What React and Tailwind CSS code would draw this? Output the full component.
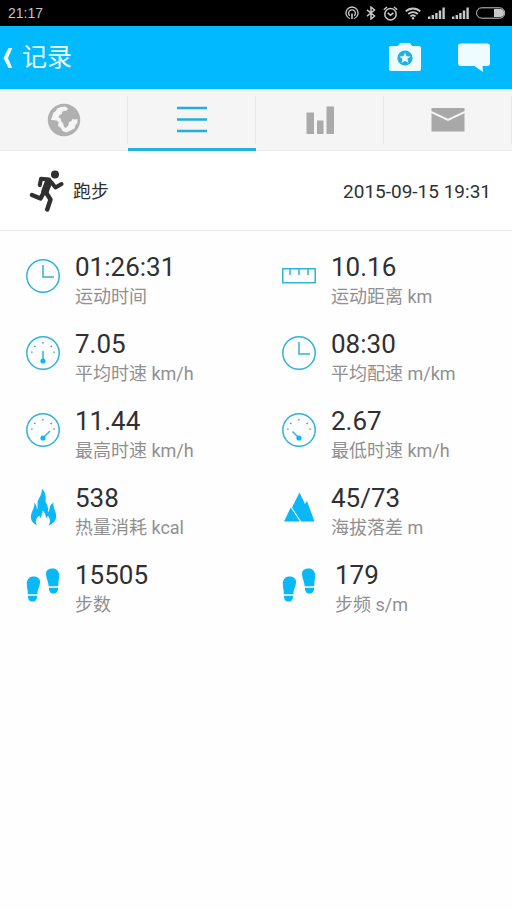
import React from 'react';

function StatusIcons() {
  return (
    <div className="flex items-center gap-[7px] text-[#c8c8c8]">
      <svg className="h-[14px] w-[14px]" viewBox="0 0 14 14" fill="none" stroke="currentColor" strokeWidth="1.3">
        <path d="M4.8 12.6A6 6 0 1 1 9.2 12.6" />
        <path d="M4.8 9.8A3.4 3.4 0 1 1 9.2 9.8" />
        <path d="M7 7.500V13" strokeWidth="1.6" />
      </svg>
      <svg className="h-[14px] w-[10px]" viewBox="0 0 10 14" fill="none" stroke="currentColor" strokeWidth="1.5">
        <path d="M1 3.8 8.500 10 5 13V1L8.500 4 1 10.2" />
      </svg>
      <svg className="h-[15px] w-[15px]" viewBox="0 0 15 15" fill="none" stroke="currentColor" strokeWidth="1.5">
        <circle cx="7.5" cy="8.2" r="5.7" />
        <path d="M0.8 3.8 4 1M14.2 3.8 11 1M4.6 6.8 7.500 9.2l2.900-2.4" />
      </svg>
      <svg className="h-[13px] w-[16px]" viewBox="0 0 16 13" fill="none" stroke="currentColor" strokeWidth="1.8">
        <path d="M0.8 4.4a10.4 10.4 0 0 1 14.4 0M3.2 7a7 7 0 0 1 9.6 0M5.4 9.4a3.8 3.8 0 0 1 5.2 0" />
        <circle cx="8" cy="11.3" r="1.2" fill="currentColor" stroke="none" />
      </svg>
      <Signal />
      <Signal />
      <svg className="h-3 w-[30px]" viewBox="0 0 30 12" fill="none" stroke="currentColor">
        <rect x="0.6" y="0.8" width="28" height="10.4" rx="5" />
        <path d="M18 2h6a4 4 0 0 1 0 8h-6z" fill="currentColor" stroke="none" />
      </svg>
    </div>
  );
}

function Signal() {
  return (
    <svg className="h-3 w-[17px]" viewBox="0 0 17 12" fill="currentColor">
      <path d="M0 9.5h2.400V12H0zM3.600 8H6v4H3.600zM7.200 6h2.400v6H7.200zM10.800 3.5h2.400V12h-2.400zM14.400 0.5h2.400V12h-2.400z" />
    </svg>
  );
}

const dial = (
  <>
    <circle cx="17" cy="17" r="16.2" />
    <path d="M5.2 16l1.4.4M8.2 9.8l1.200 1M16.9 6v1.600M25.8 9.8l-1.200 1M28.8 16l-1.4.4" stroke="#4d9fb5" />
  </>
);

const icons = {
  clock: (
    <>
      <circle cx="17" cy="17" r="16.2" />
      <path d="M17 6v12h11" />
    </>
  ),
  ruler: <path d="M.8 9.8h32.4v14H.8zM8 10v6M17 10v6M26 10v6" />,
  average: (
    <>
      {dial}
      <path d="M17 15v9" />
      <circle cx="17" cy="25" r="2.6" fill="currentColor" stroke="none" />
    </>
  ),
  fastest: (
    <>
      {dial}
      <path d="M24 18l-7 7" />
      <circle cx="17" cy="25" r="2.6" fill="currentColor" stroke="none" />
    </>
  ),
  slowest: (
    <>
      {dial}
      <path d="M10.5 18.5 17 25" />
      <circle cx="17" cy="25" r="2.6" fill="currentColor" stroke="none" />
    </>
  ),
  flame: (
    <path
      fill="currentColor"
      stroke="none"
      d="M11 35.500C6.500 33.500 4.300 30 5 25.500 5.500 21 9 18 8.300 12.500c1.900 2 2.700 4.500 2.500 7.500 1.200-2 .7-4 .7-6.500C11.800 7.500 16.500 5.500 15.800-1.500c4 4 4.200 8 3.700 11.500-.3 3 2.300 4.500 2.500 8.500.1 1.500 0 2.500-.1 3.500 1.400-1 1.700-2.500 1.700-4 .1-2.500 1.900-4 3.900-5.500-.7 5.500 2.500 8.500 2.700 13.500.1 4.500-2.400 7.500-7.700 9.500 2.500-4 1.500-7.500-.7-9.800-.4 1.200-1 2-1.800 2.300-.2-3.500-1.500-5.500-3.300-7.500-.2 2.800-1.400 4.500-1.700 7.500-.8-.6-1.400-1.200-1.900-2.200C9.800 28.500 8.800 32 11 35.500z"
    />
  ),
  mountain: (
    <g fill="currentColor" stroke="none">
      <path d="M2 31.500 8.700 17.500 18 31.500z" />
      <path d="M10 17.500 17.500 2.500 23 14l2-3L32.500 31.500H19.200z" />
    </g>
  ),
  steps: (
    <g fill="currentColor" stroke="none">
      <path d="M.8 17C.8 12 3.500 9.500 7.500 9.500c4.500 0 7 2.300 6.500 6.500-.4 3.500-2.500 7-2.700 11.300H1.800C2 23.500.8 20 .8 17zM2 28.700h9c.2 3.500-1.300 5.800-4.500 5.800S1.800 32.200 2 28.700z" />
      <path d="M33.200 9c0-5-2.700-7.500-6.700-7.500C22 1.500 19.500 3.800 20 8c.4 3.500 2.500 7 2.700 11.300h9.500C32 15.500 33.200 12 33.200 9zM32 20.700h-9c-.2 3.500 1.300 5.800 4.500 5.800S32.200 24.200 32 20.700z" />
    </g>
  ),
};

const stats = [
  { icon: 'clock', value: '01:26:31', label: '运动时间' },
  { icon: 'ruler', value: '10.16', label: '运动距离 km' },
  { icon: 'average', value: '7.05', label: '平均时速 km/h' },
  { icon: 'clock', value: '08:30', label: '平均配速 m/km' },
  { icon: 'fastest', value: '11.44', label: '最高时速 km/h' },
  { icon: 'slowest', value: '2.67', label: '最低时速 km/h' },
  { icon: 'flame', value: '538', label: '热量消耗 kcal' },
  { icon: 'mountain', value: '45/73', label: '海拔落差 m' },
  { icon: 'steps', value: '15505', label: '步数' },
  { icon: 'steps', value: '179', label: '步频 s/m', wide: true },
];

function Stat({ icon, value, label, wide }) {
  return (
    <div className={`flex pl-[26px] ${wide ? 'gap-[19px]' : 'gap-[15px]'}`}>
      <svg
        className="mt-2 h-[34px] w-[34px] shrink-0 overflow-visible text-[#08b8f8]"
        viewBox="0 0 34 34"
        fill="none"
        stroke="#2fb3d6"
        strokeWidth="1.5"
        aria-hidden="true"
      >
        {icons[icon]}
      </svg>
      <dl className="flex flex-col-reverse">
        <dt className="text-[18px] leading-[27px] whitespace-nowrap text-[#909090]">{label}</dt>
        <dd className="text-[26px] leading-[32px] text-[#303030]">{value}</dd>
      </dl>
    </div>
  );
}

const tabs = [
  {
    name: '轨迹',
    art: (
      <>
        <circle cx="17" cy="17" r="16.200" fill="#b0b0b0" />
        <path
          fill="#f5f5f5"
          d="M6.500 9.500 9 8l1-2.500 4-1.500 4-.5 3 2-1 2-3.500.5-2 1.500 1 1-3 1.500-1 2.500 2 .5.5 3 2 2 1 4 2 1 2.500-3 .5-3 2.500-1 1-2 3 .5 2-.5v4l-2 2-1 3.500-4 2-4 2-4-1.500-1.500-3-3-2 .5-4-2-1.500L4 17l1-3z"
        />
      </>
    ),
  },
  {
    name: '数据',
    art: <path d="M2 5h30M2 16.500h30M2 28h30" stroke="#22aed6" strokeWidth="2.600" />,
  },
  {
    name: '图表',
    art: (
      <path
        fill="#aaaaaa"
        d="M3.500 9.500H11V31H3.500zM14 17.500h6.500V31H14zM23.500 3.500H31V31h-7.500z"
      />
    ),
  },
  {
    name: '消息',
    art: (
      <>
        <path fill="#a8a8a8" d="M.5 5h33v23.500H.5z" />
        <path d="M0 9l17 8 17-8" stroke="#f5f5f5" strokeWidth="2" />
      </>
    ),
  },
];

export default function App() {
  return (
    <div className="min-h-screen bg-[#fefefe] font-[Roboto,'Noto_Sans_CJK_SC',sans-serif]">
      <div className="flex h-[26px] items-center justify-between bg-black pr-[6px] pl-2">
        <span className="font-['Liberation_Sans',sans-serif] text-[14px] leading-[20px] text-[#c4c4c4]">21:17</span>
        <StatusIcons />
      </div>

      <header className="flex h-[63px] items-center justify-between bg-[#00b9ff] pr-[22px] pl-[3px] text-[#effcff]">
        <button type="button" className="flex items-center gap-[9px]">
          <svg className="h-[20px] w-[10px]" viewBox="0 0 10 20" fill="currentColor" aria-hidden="true">
            <path d="M5.500 0h3.800L5 10l4.300 10H5.500L.5 10z" />
          </svg>
          <h1 className="text-[25px] leading-[36px]">记录</h1>
        </button>
        <div className="flex items-center gap-[37px]">
          <button type="button" aria-label="拍照">
            <svg className="h-[30px] w-8" viewBox="0 0 32 30" aria-hidden="true">
              <path
                fill="currentColor"
                d="M2 3h7l2-3h10l2 3h7a2 2 0 0 1 2 2v21a2 2 0 0 1-2 2H2a2 2 0 0 1-2-2V5a2 2 0 0 1 2-2z"
              />
              <circle cx="16" cy="15" r="7.600" fill="#1fb0e6" />
              <path
                fill="currentColor"
                d="m16 9.500 1.500 3.800 4 .2-3.100 2.500 1.100 4-3.500-2.300-3.500 2.300 1.100-4-3.100-2.500 4-.2z"
              />
            </svg>
          </button>
          <button type="button" aria-label="评论">
            <svg className="h-[30px] w-8" viewBox="0 0 32 30" fill="currentColor" aria-hidden="true">
              <path d="M3 .5h26a3 3 0 0 1 3 3V20a3 3 0 0 1-3 3h-4.500l.5 6-8.500-6H3a3 3 0 0 1-3-3V3.500a3 3 0 0 1 3-3z" />
            </svg>
          </button>
        </div>
      </header>

      <nav className="grid h-[62px] grid-cols-4 bg-[#f5f5f5]">
        {tabs.map((tab, i) => (
          <button
            key={tab.name}
            type="button"
            aria-label={tab.name}
            className={`flex flex-col border-b ${i === 1 ? 'border-b-3 border-[#22b2dd]' : 'border-[#ebebeb]'}`}
          >
            <span className="mt-[7px] flex h-12 w-full items-center justify-center border-r border-[#e8e8e8]">
              <svg className="h-[34px] w-[34px]" viewBox="0 0 34 34" fill="none" aria-hidden="true">
                {tab.art}
              </svg>
            </span>
          </button>
        ))}
      </nav>

      <main>
        <section className="flex h-20 items-center justify-between border-b border-[#ebebeb] bg-white pt-px pr-[21px] pl-[28px] text-[#303030]">
          <div className="flex items-center gap-[9px]">
            <svg
              className="h-[42px] w-9"
              viewBox="0 0 36 42"
              fill="none"
              stroke="currentColor"
              strokeLinecap="round"
              strokeLinejoin="round"
              aria-hidden="true"
            >
              <circle cx="27" cy="4.500" r="4" fill="currentColor" stroke="none" />
              <path d="M20.500 12 17 21.500" strokeWidth="7.500" />
              <path d="M21 9.500 13 8.800l-1.200 6.200M23.500 12.500l4 5 6-3.500" strokeWidth="4" />
              <path d="M16 22l-3.500 6.500-8.500-3.500M18 22.500l4.500 7-3.300 10" strokeWidth="4.400" />
            </svg>
            <h2 className="text-[18px] leading-[27px]">跑步</h2>
          </div>
          <time dateTime="2015-09-15T19:31" className="text-[19px] leading-[27px]">
            2015-09-15 19:31
          </time>
        </section>

        <section className="grid grid-cols-2 gap-y-[18px] py-5">
          {stats.map((stat) => (
            <Stat key={stat.label} {...stat} />
          ))}
        </section>
      </main>
    </div>
  );
}
